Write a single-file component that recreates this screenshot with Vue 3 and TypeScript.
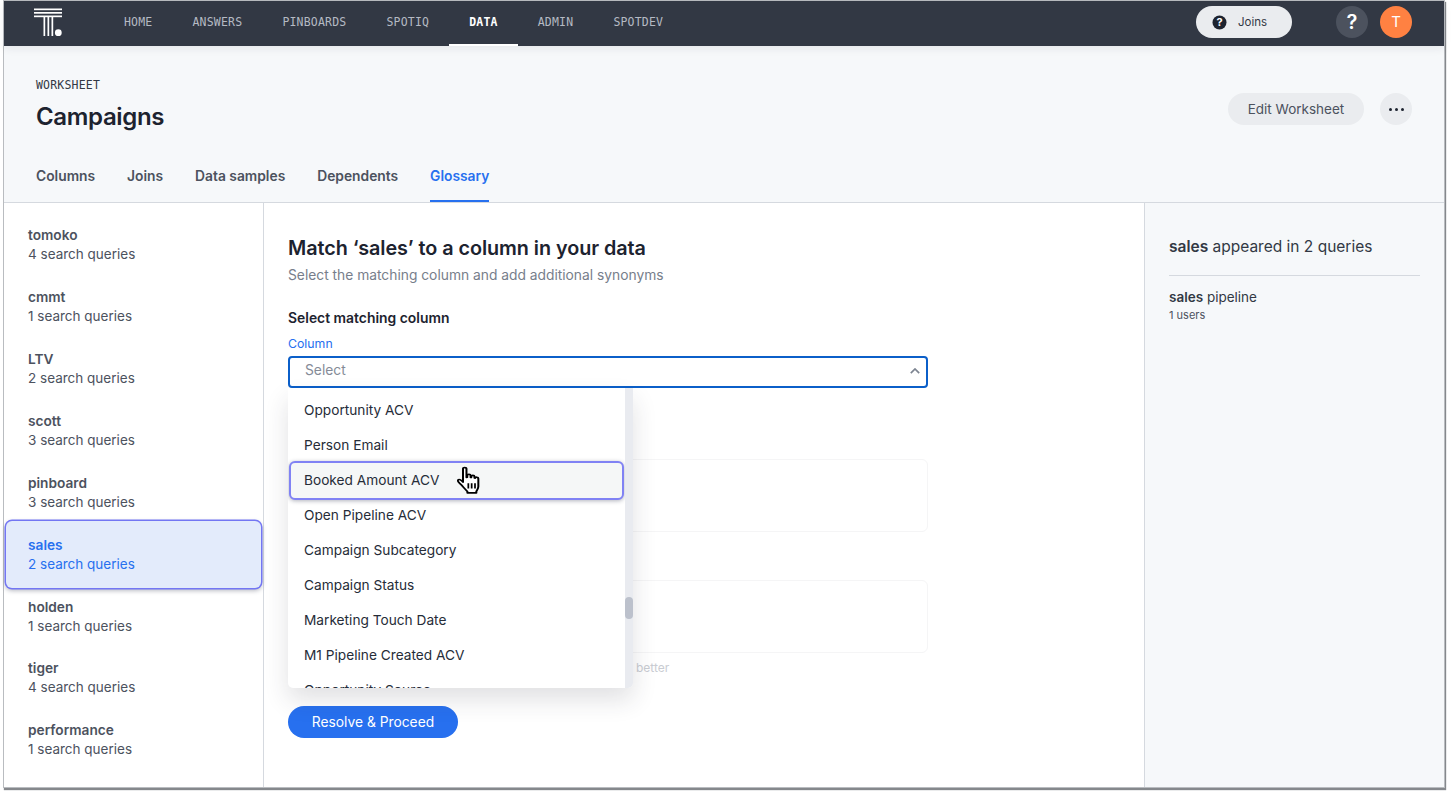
<script setup lang="ts">
const nav = [
  { label: 'HOME', active: false },
  { label: 'ANSWERS', active: false },
  { label: 'PINBOARDS', active: false },
  { label: 'SPOTIQ', active: false },
  { label: 'DATA', active: true },
  { label: 'ADMIN', active: false },
  { label: 'SPOTDEV', active: false },
]
const tabs = ['Columns', 'Joins', 'Data samples', 'Dependents', 'Glossary']
const terms = [
  { name: 'tomoko', n: 4 },
  { name: 'cmmt', n: 1 },
  { name: 'LTV', n: 2 },
  { name: 'scott', n: 3 },
  { name: 'pinboard', n: 3 },
  { name: 'sales', n: 2, active: true },
  { name: 'holden', n: 1 },
  { name: 'tiger', n: 4 },
  { name: 'performance', n: 1 },
]
const options = [
  'Opportunity ACV',
  'Person Email',
  'Booked Amount ACV',
  'Open Pipeline ACV',
  'Campaign Subcategory',
  'Campaign Status',
  'Marketing Touch Date',
  'M1 Pipeline Created ACV',
  'Opportunity Source',
]
</script>

<template>
  <div class="page">
    <div class="window">
      <header class="topbar">
        <svg class="logo" width="30" height="30" viewBox="0 0 30 30">
          <rect x="0" y="0.5" width="28" height="1.700" fill="#fff" />
          <rect x="0" y="4" width="28" height="1.700" fill="#fff" />
          <rect x="0" y="7.500" width="28" height="1.700" fill="#fff" />
          <rect x="9.500" y="8" width="1.700" height="20" fill="#fff" />
          <rect x="13.500" y="8" width="1.700" height="20" fill="#fff" />
          <rect x="17.500" y="8" width="1.700" height="20" fill="#fff" />
          <circle cx="24.300" cy="24.700" r="3.400" fill="#fff" />
        </svg>
        <nav class="nav">
          <a v-for="item in nav" :key="item.label" class="nav-item" :class="{ on: item.active }">{{ item.label }}</a>
        </nav>
        <div class="spacer"></div>
        <button class="joins">
          <svg width="15" height="15" viewBox="0 0 15 15">
            <circle cx="7.500" cy="7.500" r="7" fill="#1d232f" />
            <text x="7.500" y="11.300" text-anchor="middle" class="qmark">?</text>
          </svg>
          <span>Joins</span>
        </button>
        <button class="help">?</button>
        <div class="avatar">T</div>
      </header>

      <section class="head">
        <div class="head-row">
          <div>
            <div class="eyebrow">WORKSHEET</div>
            <h1>Campaigns</h1>
          </div>
          <div class="head-actions">
            <button class="edit">Edit Worksheet</button>
            <button class="more"><i></i><i></i><i></i></button>
          </div>
        </div>
        <div class="tabs">
          <a v-for="t in tabs" :key="t" class="tab" :class="{ on: t === 'Glossary' }">{{ t }}</a>
        </div>
      </section>

      <div class="body">
        <aside class="terms">
          <div v-for="t in terms" :key="t.name" class="term" :class="{ on: t.active }">
            <strong>{{ t.name }}</strong>
            <span>{{ t.n }} search queries</span>
          </div>
        </aside>

        <main class="main">
          <h2>Match ‘sales’ to a column in your data</h2>
          <p class="sub">Select the matching column and add additional synonyms</p>
          <h3>Select matching column</h3>
          <label class="field-label">Column</label>
          <div class="select-wrap">
            <div class="select">
              <span>Select</span>
              <svg width="10" height="6" viewBox="0 0 10 6"><path d="M.8 5.200L5 1l4.200 4.200" fill="none" stroke="#7d8491" stroke-width="1.700" /></svg>
            </div>
            <div class="dropdown">
              <div class="options">
                <div v-for="o in options" :key="o" class="option" :class="{ hover: o === 'Booked Amount ACV' }">{{ o }}</div>
              </div>
              <div class="scroll"><div class="thumb"></div></div>
            </div>
            <svg class="cursor" width="24" height="28" viewBox="2 0 18 26" preserveAspectRatio="none">
              <path d="M6.500 2.600c0-1.600 2.600-1.600 2.600 0v8l.6-.2V8.800c0-1.500 2.500-1.500 2.500 0v1.800l.5.100V9.800c0-1.400 2.400-1.400 2.400 0v1.400l.5.100c.2-1.300 2.400-1.200 2.400.2v7.500c0 2-.9 3-1.500 4.500v1.500H9.800v-1.400c-1.600-1.800-3-4-5-6.600-1-1.300-2.800-2.900-2-4 .9-1.100 2.500.1 3.700 1.900V2.600z" fill="#fff" stroke="#000" stroke-width="1.500" stroke-linejoin="round" />
              <path d="M10.500 16v5M13 16v5M15.500 16v5" stroke="#000" stroke-width="1.300" fill="none" />
            </svg>
          </div>
          <div class="ghost-gap first"></div>
          <div class="ghost-box"></div>
          <div class="ghost-gap"></div>
          <div class="ghost-box"></div>
          <p class="hint">better</p>
          <button class="resolve">Resolve &amp; Proceed</button>
        </main>

        <aside class="details">
          <div class="details-title"><b>sales</b> appeared in 2 queries</div>
          <div class="details-item"><b>sales</b> pipeline</div>
          <div class="details-sub">1 users</div>
        </aside>
      </div>
    </div>
  </div>
</template>

<style>
html, body { margin: 0; background: #fff; overflow: hidden; }
</style>

<style scoped>
* { box-sizing: border-box; }
.page { height: 796px; padding: 1px 7px 9px 4px; background: #fff; }
.window {
  width: 1440px;
  height: 786px;
  display: flex;
  flex-direction: column;
  background: #fff;
  box-shadow: 0 0 0 1px #b9bcc0, 1px 2px 1px 1px #85888c;
  font-family: Inter, "Liberation Sans", sans-serif;
  color: #1d232f;
  overflow: visible;
}
.topbar {
  height: 45px;
  flex: none;
  background: #323844;
  display: flex;
  align-items: center;
  padding: 0 32px 3px 30px;
  box-shadow: 0 3px 8px rgba(30, 35, 50, .07);
  position: relative;
  z-index: 2;
}
.logo { margin-top: 2px; flex: none; }
.nav { display: flex; margin-left: 40px; align-self: flex-start; }
.nav-item {
  padding: 0 20px;
  display: flex;
  align-items: center;
  height: 45px;
  font: 11.500px/1 "DejaVu Sans Mono", monospace;
  letter-spacing: .2px;
  color: #b5bac3;
  border-bottom: 2px solid transparent;
}
.nav-item.on { color: #fff; font-weight: 700; border-bottom-color: #fff; }
.spacer { flex: 1; }
.joins {
  width: 96px;
  height: 32px;
  border: 0;
  border-radius: 16px;
  background: #eaecef;
  display: flex;
  align-items: center;
  gap: 11px;
  padding: 0 0 0 16px;
  font: 11.500px Inter, sans-serif;
  color: #323844;
}
.qmark { font: 700 11px Inter, sans-serif; fill: #fff; }
.help {
  width: 32px;
  height: 32px;
  margin-left: 44px;
  border: 0;
  border-radius: 50%;
  background: #4c525e;
  color: #fff;
  font: 600 20px Inter, sans-serif;
  padding: 0;
}
.avatar {
  width: 32px;
  height: 32px;
  margin-left: 12px;
  border-radius: 50%;
  background: #ff8142;
  color: #fff;
  font: 15px/32px Inter, sans-serif;
  text-align: center;
}
.head {
  height: 157px;
  flex: none;
  background: #f6f8fa;
  border-bottom: 1px solid #d5d9df;
  padding: 32px 32px 0;
  display: flex;
  flex-direction: column;
}
.head-row { display: flex; justify-content: space-between; }
.eyebrow { font: 11.500px/14px "DejaVu Sans Mono", monospace; letter-spacing: .2px; color: #323844; }
h1 { margin: 10px 0 0; font: 600 24px/30px Inter, sans-serif; letter-spacing: -.35px; color: #1d232f; }
.head-actions { display: flex; gap: 16px; padding-top: 15px; }
.edit {
  width: 136px;
  height: 32px;
  border: 0;
  border-radius: 16px;
  background: #eaecef;
  font: 13.500px Inter, sans-serif;
  color: #4c525e;
  padding: 0;
}
.more {
  width: 32px;
  height: 32px;
  border: 0;
  border-radius: 50%;
  background: #eaecef;
  display: flex;
  align-items: center;
  justify-content: center;
  gap: 3px;
  padding: 0;
}
.more i { width: 3px; height: 3px; border-radius: 50%; background: #1d232f; }
.tabs { display: flex; gap: 32px; margin-top: auto; height: 50px; }
.tab {
  font: 600 13.800px/48px Inter, sans-serif;
  color: #4c525e;
  border-bottom: 2px solid transparent;
  height: 50px;
}
.tab.on { color: #2770ef; border-bottom-color: #2770ef; }
.body { flex: 1; display: flex; min-height: 0; }
.terms {
  width: 260px;
  flex: none;
  border-right: 1px solid #d5d9df;
  padding-top: 14.100px;
}
.term {
  height: 61.900px;
  padding: 9px 24px 0;
  display: flex;
  flex-direction: column;
  font: 13.500px/19px Inter, sans-serif;
  color: #4c525e;
}
.term strong { font-weight: 600; font-size: 13.700px; }
.term.on {
  height: 67px;
  margin: -5.500px 2px .8px;
  padding: 14.500px 22px 0;
  color: #2770ef;
  background: #e3ebfb;
  border-radius: 6px;
  box-shadow: 0 0 0 1.500px #7376f3, 0 2px 4px 1px rgba(60, 65, 90, .35);
  position: relative;
}
.term.on + .term { height: 61px; }
.main { width: 880px; flex: none; padding: 33px 24px 0; position: relative; }
h2 { margin: 0; font: 600 19.800px/24px Inter, sans-serif; color: #1d232f; letter-spacing: -.05px; }
.sub { margin: 6px 0 0; font: 13.800px/18px Inter, sans-serif; color: #777e8b; }
h3 { margin: 25px 0 0; font: 600 13.900px/18px Inter, sans-serif; color: #1d232f; }
.field-label { display: block; margin-top: 10px; font: 12.300px/14px Inter, sans-serif; color: #2770ef; }
.select-wrap { position: relative; width: 640px; margin-top: 5px; }
.select {
  height: 32px;
  border: 2px solid #0b5fc9;
  border-radius: 4px;
  display: flex;
  align-items: center;
  justify-content: space-between;
  padding: 0 6px 5px 15px;
  font: 13.800px Inter, sans-serif;
  color: #858b97;
  background: #fff;
}
.select svg { margin-top: 3px; }
.dropdown {
  position: absolute;
  left: 0;
  top: 32px;
  width: 345px;
  height: 300px;
  background: #fff;
  display: flex;
  border-radius: 0 0 5px 5px;
  box-shadow: 0 12px 24px rgba(40, 45, 60, .14);
  overflow: hidden;
  z-index: 3;
}
.options { flex: 1; padding-top: 5px; overflow: hidden; }
.option {
  height: 35px;
  padding-left: 16px;
  font: 13.700px/35px Inter, sans-serif;
  color: #262c38;
}
.option.hover {
  margin: -2px 1px -2px 1px;
  padding-left: 13px;
  height: 39px;
  background: #f5f7f7;
  border: 2px solid #8082f4;
  border-radius: 6px;
  box-shadow: 0 1px 4px rgba(60, 65, 90, .4);
  position: relative;
}
.scroll { width: 8px; flex: none; background: #e9ebf0; position: relative; }
.thumb { position: absolute; top: 209px; left: 0; width: 8px; height: 22px; border-radius: 4px; background: #bcc1cc; }
.cursor { position: absolute; left: 169px; top: 110px; z-index: 4; }
.ghost-gap { height: 48px; }
.ghost-gap.first { height: 71px; }
.ghost-box {
  width: 640px;
  height: 73px;
  border: 1px solid #f5f5f6;
  border-radius: 6px;
}
.hint {
  margin: 8px 0 0 348px;
  font: 12px/14px Inter, sans-serif;
  color: #c9ccd2;
}
.resolve {
  display: block;
  margin-top: 31px;
  width: 170px;
  height: 32px;
  border: 0;
  border-radius: 16px;
  background: #2770ef;
  color: #fff;
  font: 13.800px Inter, sans-serif;
  padding: 0;
}
.details { flex: 1; background: #f6f8fa; border-left: 1px solid #d5d9df; padding: 34px 24px 0; }
.details-title {
  height: 39px;
  font: 15.500px/20px Inter, sans-serif;
  color: #323844;
  border-bottom: 1px solid #d5d9df;
  width: 251px;
}
.details-title b, .details-item b { font-weight: 600; }
.details-item { margin-top: 12px; font: 13.500px/18px Inter, sans-serif; color: #323844; }
.details-sub { margin-top: 1px; font: 11px/16px Inter, sans-serif; color: #4c525e; }
</style>
